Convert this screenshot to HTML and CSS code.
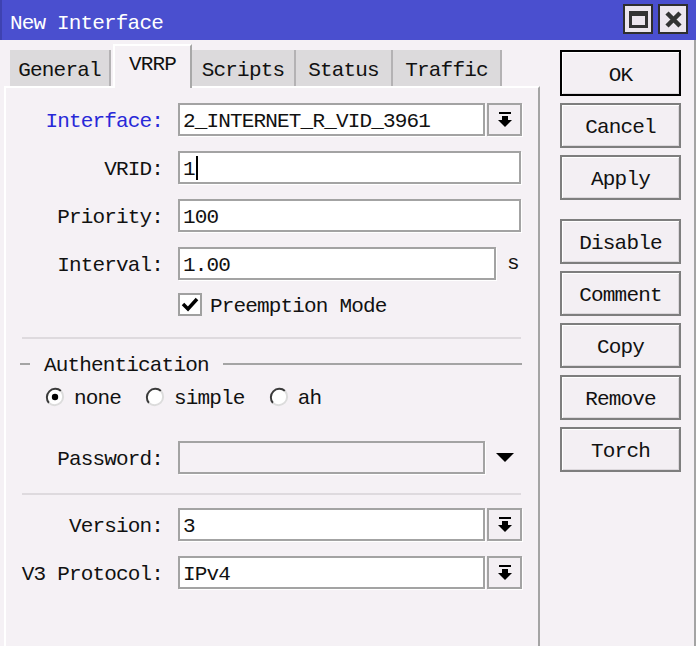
FILE: index.html
```
<!DOCTYPE html>
<html>
<head>
<meta charset="utf-8">
<link rel="stylesheet" href="styles.css">
</head>
<body>
<div class="window">
  <div class="titlebar">
    <span class="title">New Interface</span>
    <div class="tb-buttons">
      <div class="tb-btn"><svg width="19" height="17" viewBox="0 0 19 17"><rect x="1.5" y="1.5" width="16" height="14" fill="none" stroke="#333" stroke-width="3"/><rect x="1" y="1" width="17" height="4" fill="#333"/></svg></div>
      <div class="tb-btn"><svg width="17" height="17" viewBox="0 0 17 17"><path d="M2 2 L15 15 M15 2 L2 15" stroke="#333" stroke-width="4.5"/></svg></div>
    </div>
  </div>
  <div class="content">
    <div class="left">
      <div class="tabs">
        <div class="tab tab-general">General</div>
        <div class="tab tab-active">VRRP</div>
        <div class="tab tab-scripts">Scripts</div>
        <div class="tab tab-status">Status</div>
        <div class="tab tab-traffic">Traffic</div>
      </div>
      <div class="panel">
        <div class="row">
          <span class="lbl lbl-blue">Interface:</span>
          <div class="input input-short">2_INTERNET_R_VID_3961</div>
          <div class="dd-btn"><svg width="14" height="16" viewBox="0 0 14 16"><rect x="1" y="0" width="12" height="2" fill="#000"/><rect x="4" y="4" width="6" height="5" fill="#000"/><path d="M0 8 H14 L7 15 Z" fill="#000"/></svg></div>
        </div>
        <div class="row">
          <span class="lbl">VRID:</span>
          <div class="input input-full">1<span class="caret"></span></div>
        </div>
        <div class="row">
          <span class="lbl">Priority:</span>
          <div class="input input-full">100</div>
        </div>
        <div class="row">
          <span class="lbl">Interval:</span>
          <div class="input input-mid">1.00</div>
          <span class="unit">s</span>
        </div>
        <div class="check-row">
          <div class="checkbox"><svg width="20" height="19" viewBox="0 0 20 19"><path d="M3 9 L8 14 L17 4" fill="none" stroke="#000" stroke-width="3.5"/></svg></div>
          <span class="check-label">Preemption Mode</span>
        </div>
        <div class="sep sep-1"></div>
        <div class="legend">
          <span class="legend-dash"></span>
          <span class="legend-text">Authentication</span>
          <span class="legend-line"></span>
        </div>
        <div class="radio-row">
          <span class="radio-item"><svg class="radio" width="20" height="20" viewBox="0 0 20 20"><circle cx="10" cy="10" r="8.5" fill="#fff"/><path d="M4 16 A8.5 8.5 0 0 1 16 4" fill="none" stroke="#3a3a3a" stroke-width="2"/><path d="M16 4 A8.5 8.5 0 0 1 4 16" fill="none" stroke="#dcdcdc" stroke-width="2"/><circle cx="10" cy="10" r="3.2" fill="#000"/></svg>none</span>
          <span class="radio-item"><svg class="radio" width="20" height="20" viewBox="0 0 20 20"><circle cx="10" cy="10" r="8.5" fill="#fff"/><path d="M4 16 A8.5 8.5 0 0 1 16 4" fill="none" stroke="#3a3a3a" stroke-width="2"/><path d="M16 4 A8.5 8.5 0 0 1 4 16" fill="none" stroke="#dcdcdc" stroke-width="2"/></svg>simple</span>
          <span class="radio-item"><svg class="radio" width="20" height="20" viewBox="0 0 20 20"><circle cx="10" cy="10" r="8.5" fill="#fff"/><path d="M4 16 A8.5 8.5 0 0 1 16 4" fill="none" stroke="#3a3a3a" stroke-width="2"/><path d="M16 4 A8.5 8.5 0 0 1 4 16" fill="none" stroke="#dcdcdc" stroke-width="2"/></svg>ah</span>
        </div>
        <div class="row row-password">
          <span class="lbl">Password:</span>
          <div class="input input-pass"></div>
          <svg class="dd-arrow" width="18" height="9" viewBox="0 0 18 9"><path d="M0 0 H18 L9 9 Z" fill="#000"/></svg>
        </div>
        <div class="sep sep-2"></div>
        <div class="row">
          <span class="lbl">Version:</span>
          <div class="input input-short">3</div>
          <div class="dd-btn"><svg width="14" height="16" viewBox="0 0 14 16"><rect x="1" y="0" width="12" height="2" fill="#000"/><rect x="4" y="4" width="6" height="5" fill="#000"/><path d="M0 8 H14 L7 15 Z" fill="#000"/></svg></div>
        </div>
        <div class="row">
          <span class="lbl">V3 Protocol:</span>
          <div class="input input-short">IPv4</div>
          <div class="dd-btn"><svg width="14" height="16" viewBox="0 0 14 16"><rect x="1" y="0" width="12" height="2" fill="#000"/><rect x="4" y="4" width="6" height="5" fill="#000"/><path d="M0 8 H14 L7 15 Z" fill="#000"/></svg></div>
        </div>
      </div>
    </div>
    <div class="actions">
      <div class="btn btn-default">OK</div>
      <div class="btn">Cancel</div>
      <div class="btn">Apply</div>
      <div class="btn btn-group">Disable</div>
      <div class="btn">Comment</div>
      <div class="btn">Copy</div>
      <div class="btn">Remove</div>
      <div class="btn">Torch</div>
    </div>
  </div>
</div>
</body>
</html>
```

FILE: styles.css
```
* { box-sizing: border-box; }
html, body { margin: 0; padding: 0; }
body {
  font-family: "Liberation Mono", "DejaVu Sans Mono", monospace;
  font-size: 21px;
  letter-spacing: -0.84px;
  color: #111;
  background: #f5f1f5;
}
.window {
  width: 696px;
  height: 646px;
  display: flex;
  flex-direction: column;
  background: #f5f1f5;
  overflow: hidden;
}
.titlebar {
  height: 40px;
  background: #4a4fcf;
  border-left: 2px solid #3e42b0;
  display: flex;
  align-items: center;
  justify-content: space-between;
  padding: 0 8px 0 8px;
}
.title {
  color: #fff;
  line-height: 1;
  padding-top: 6px;
}
.tb-buttons {
  display: flex;
  gap: 5px;
  align-self: flex-start;
  margin-top: 4px;
}
.tb-btn {
  width: 30px;
  height: 30px;
  background: #ece6ee;
  border: 2px solid #2e2e2e;
  display: flex;
  align-items: center;
  justify-content: center;
}
.content {
  flex: 1;
  display: flex;
}
.left {
  width: 540px;
  display: flex;
  flex-direction: column;
  padding-left: 4px;
}
.tabs {
  display: flex;
  align-items: flex-end;
  height: 46px;
  padding-left: 6px;
  position: relative;
  z-index: 1;
}
.tab {
  height: 36px;
  background: #dcdadc;
  border-right: 2px solid #b4b2b4;
  display: flex;
  align-items: center;
  justify-content: center;
  padding-top: 5px;
  line-height: 1;
}
.tab-general { width: 101px; margin-right: 2px; }
.tab-active {
  width: 79px;
  height: 44px;
  margin-bottom: -2px;
  background: #f5f1f5;
  border-top: 2px solid #fff;
  border-left: 2px solid #fff;
  border-right: 2px solid #a8a8a8;
  padding-top: 0;
  padding-bottom: 5px;
}
.tab-scripts { width: 104px; }
.tab-status { width: 97px; }
.tab-traffic { width: 109px; }
.panel {
  flex: 1;
  border-top: 2px solid #fff;
  border-left: 2px solid #fff;
  border-right: 2px solid #a4a4a4;
  padding-top: 15px;
}
.row {
  display: flex;
  align-items: center;
  height: 33px;
  margin-bottom: 15px;
}
.lbl {
  width: 157px;
  margin-right: 15px;
  text-align: right;
  white-space: nowrap;
  padding-top: 4px;
  line-height: 1;
}
.lbl-blue { color: #2828d8; }
.input {
  height: 33px;
  background: #fff;
  border: 2px solid #a3a3a3;
  box-shadow: 1px 1px 0 #fff;
  padding: 3px 3px 0;
  display: flex;
  align-items: center;
  line-height: 1;
  white-space: nowrap;
  overflow: hidden;
}
.input-short { width: 307px; }
.input-full { width: 343px; }
.input-mid { width: 318px; }
.input-pass { width: 307px; background: #f5f1f5; }
.caret {
  display: inline-block;
  width: 2px;
  height: 24px;
  background: #000;
  margin-left: 1px;
  margin-top: -3px;
}
.dd-btn {
  width: 35px;
  height: 33px;
  margin-left: 2px;
  border: 2px solid #a3a3a3;
  box-shadow: 1px 1px 0 #fff;
  background: #f3eff3;
  display: flex;
  align-items: center;
  justify-content: center;
}
.unit { margin-left: 11px; line-height: 1; }
.check-row {
  display: flex;
  align-items: center;
  height: 23px;
  margin-top: -2px;
  margin-left: 172px;
}
.checkbox {
  width: 24px;
  height: 23px;
  background: #fff;
  border: 2px solid #a0a0a0;
  display: flex;
  align-items: center;
  justify-content: center;
}
.check-label { margin-left: 8px; line-height: 1; padding-top: 4px; }
.sep {
  height: 2px;
  background: #dedade;
  margin-left: 16px;
  width: 499px;
}
.sep-1 { margin-top: 21px; }
.legend {
  display: flex;
  align-items: center;
  height: 20px;
  margin-top: 15px;
}
.legend-dash {
  width: 10px;
  height: 2px;
  background: #a4a4a4;
  margin-left: 14px;
}
.legend-text { margin-left: 14px; line-height: 1; padding-top: 2px; }
.legend-line {
  width: 299px;
  height: 2px;
  background: #a4a4a4;
  margin-left: 14px;
}
.radio-row {
  display: flex;
  align-items: center;
  height: 22px;
  margin-top: 13px;
  margin-left: 39px;
  gap: 24px;
}
.radio-item {
  display: flex;
  align-items: center;
  line-height: 1;
}
.radio { margin-right: 9px; margin-top: -3px; }
.row-password { margin-top: 32px; margin-bottom: 0; }
.dd-arrow { margin-left: 11px; }
.sep-2 { margin-top: 19px; margin-bottom: 13px; }
.actions {
  flex: 1;
  border-right: 2px solid #a4a4a4;
  padding: 10px 0 0 20px;
  display: flex;
  flex-direction: column;
  gap: 7px;
}
.btn {
  width: 121px;
  height: 45px;
  background: #f3eff3;
  border: 2px solid #7e7e7e;
  box-shadow: inset 1px 1px 0 #fff, inset -1px -1px 0 #dcd8dc;
  display: flex;
  align-items: center;
  justify-content: center;
  line-height: 1;
  padding-top: 4px;
}
.btn-default { border-color: #000; height: 46px; }
.btn-group { margin-top: 12px; }
```
